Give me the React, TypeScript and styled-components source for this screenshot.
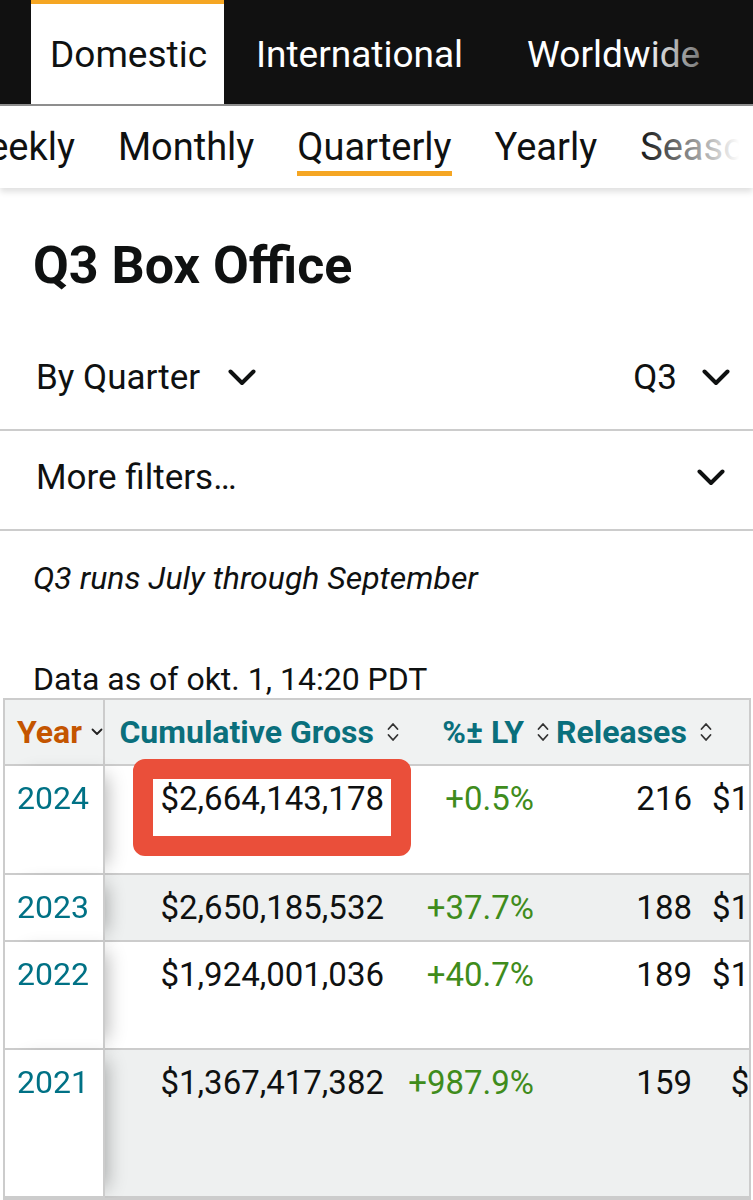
import React from "react";
import styled, { createGlobalStyle, css } from "styled-components";

const GlobalStyle = createGlobalStyle`
  html, body {
    margin: 0;
    padding: 0;
    background: #ffffff;
  }
  body {
    font-family: Roboto, "Liberation Sans", Arial, sans-serif;
    color: #0f1111;
    overflow-x: hidden;
  }
`;

const Page = styled.div`
  width: 753px;
  overflow: hidden;
`;

/* ---------- region tabs ---------- */

const TopNav = styled.nav`
  position: relative;
  display: flex;
  height: 104px;
  padding-left: 31px;
  background: #111111;
  border-bottom: 2px solid #8f8f8f;
  overflow: hidden;

  &::after {
    content: "";
    position: absolute;
    top: 0;
    right: 0;
    bottom: 0;
    width: 110px;
    background: linear-gradient(to right, rgba(17, 17, 17, 0), #111111 92%);
    pointer-events: none;
  }
`;

const TopTab = styled.a<{ $active?: boolean }>`
  display: flex;
  align-items: center;
  padding: 0 32px;
  font-size: 37px;
  color: #ffffff;
  white-space: nowrap;
  text-decoration: none;
  border-top: 4px solid transparent;
  box-sizing: border-box;
  ${(p) =>
    p.$active &&
    css`
      padding: 0 17px 0 19px;
      background: #ffffff;
      color: #0f1111;
      border-top-color: #f5a623;
    `}
`;

/* ---------- period tabs ---------- */

const SubNav = styled.nav`
  position: relative;
  height: 82px;
  display: flex;
  align-items: center;
  overflow: hidden;
  background: #ffffff;
  box-shadow: 0 4px 6px rgba(0, 0, 0, 0.12);

  &::after {
    content: "";
    position: absolute;
    top: 0;
    right: 0;
    bottom: 0;
    width: 115px;
    background: linear-gradient(to right, rgba(255, 255, 255, 0), #ffffff 88%);
    pointer-events: none;
  }
`;

const SubTabStrip = styled.div`
  display: flex;
  gap: 43px;
  margin-left: -45px;
`;

const SubTab = styled.a<{ $active?: boolean }>`
  font-size: 38px;
  line-height: 42px;
  white-space: nowrap;
  color: #0f1111;
  text-decoration: none;
  padding: 8px 0 3px;
  border-bottom: 5px solid ${(p) => (p.$active ? "#f5a623" : "transparent")};
`;

/* ---------- heading and filters ---------- */

const Title = styled.h1`
  margin: 48px 0 35px 33px;
  font-size: 52px;
  line-height: 60px;
  font-weight: 700;
`;

const FilterRow = styled.div<{ $h: number }>`
  display: flex;
  align-items: center;
  justify-content: space-between;
  height: ${(p) => p.$h}px;
  padding: 0 0 6px 36px;
  border-bottom: 2px solid #cccccc;
  box-sizing: border-box;
`;

const Select = styled.div<{ $gap: number; $right?: number }>`
  display: flex;
  align-items: center;
  gap: ${(p) => p.$gap}px;
  margin-right: ${(p) => p.$right ?? 0}px;
  font-size: 35px;
  white-space: nowrap;
`;

const Note = styled.p`
  margin: 28px 0 0 33px;
  font-size: 32px;
  line-height: 38px;
  font-style: italic;
`;

const Stamp = styled.p`
  margin: 63px 0 0 33px;
  font-size: 32px;
  line-height: 38px;
`;

/* ---------- results table ---------- */

const TableFrame = styled.div`
  position: relative;
  margin: 0 2px 0 3px;
  border: 2px solid #cccccc;
  overflow: hidden;
`;

const Table = styled.table`
  border-collapse: separate;
  border-spacing: 0;
  table-layout: fixed;
  width: 906px;
`;

const HeadRow = styled.tr`
  height: 66px;
  background: #f0f2f2;
`;

const HeadCell = styled.th<{ $w: number }>`
  width: ${(p) => p.$w}px;
  padding: 0 3px;
  text-align: right;
  font-size: 32px;
  border-bottom: 2px solid #cccccc;
  white-space: nowrap;
  box-sizing: border-box;
`;

const YearHeadCell = styled(HeadCell)`
  position: sticky;
  left: 0;
  z-index: 1;
  padding-left: 12px;
  text-align: left;
  background: #f0f2f2;
  border-right: 2px solid #cccccc;
`;

const HeadLabel = styled.span<{ $sorted?: boolean }>`
  display: inline-flex;
  align-items: center;
  gap: ${(p) => (p.$sorted ? 9 : 12)}px;
  font-weight: 700;
  color: ${(p) => (p.$sorted ? "#c45500" : "#0a6f7c")};
`;

const Row = styled.tr<{ $h: number; $shade?: boolean }>`
  height: ${(p) => p.$h}px;
  background: ${(p) => (p.$shade ? "#eef0f0" : "#ffffff")};
`;

const Cell = styled.td<{ $tone?: "gain" }>`
  padding: 13px 19px 0 0;
  vertical-align: top;
  text-align: right;
  font-size: 33px;
  white-space: nowrap;
  border-bottom: 2px solid #cccccc;
  color: ${(p) => (p.$tone === "gain" ? "#3f8c1c" : "#0f1111")};
  box-sizing: border-box;
`;

const YearCell = styled.td`
  position: sticky;
  left: 0;
  z-index: 1;
  padding: 13px 0 0 12px;
  vertical-align: top;
  text-align: left;
  font-size: 32px;
  background: #ffffff;
  color: #007185;
  border-bottom: 2px solid #cccccc;
  border-right: 2px solid #cccccc;
  box-shadow: 12px 0 18px -10px rgba(0, 0, 0, 0.3);
  box-sizing: border-box;
`;

const Callout = styled.div`
  position: absolute;
  left: 128px;
  top: 59px;
  width: 278px;
  height: 97px;
  border: 20px solid #ea4f3a;
  border-radius: 12px;
  box-sizing: border-box;
  z-index: 2;
  pointer-events: none;
`;

/* ---------- icons ---------- */

const Chevron = () => (
  <svg width="28" height="17" viewBox="0 0 28 17" fill="none">
    <path d="M2.5 2.5 L14 14 L25.5 2.5" stroke="#0f1111" strokeWidth="4" strokeLinecap="round" strokeLinejoin="round" />
  </svg>
);

const SortIcon = () => (
  <svg width="14" height="24" viewBox="0 0 14 24" fill="none">
    <path d="M2.5 9 L7 4 L11.5 9" stroke="#333" strokeWidth="1.8" strokeLinecap="round" strokeLinejoin="round" />
    <path d="M2.5 15 L7 20 L11.5 15" stroke="#333" strokeWidth="1.8" strokeLinecap="round" strokeLinejoin="round" />
  </svg>
);

const SortDown = () => (
  <svg width="12" height="10" viewBox="0 0 12 10" fill="none">
    <path d="M1.5 2.5 L6 7 L10.5 2.5" stroke="#222" strokeWidth="1.8" strokeLinecap="round" strokeLinejoin="round" />
  </svg>
);

type YearRow = {
  year: string;
  gross: string;
  change: string;
  releases: string;
  average: string;
  height: number;
};

const rows: YearRow[] = [
  { year: "2024", gross: "$2,664,143,178", change: "+0.5%", releases: "216", average: "$12,334,000", height: 109 },
  { year: "2023", gross: "$2,650,185,532", change: "+37.7%", releases: "188", average: "$14,096,731", height: 67 },
  { year: "2022", gross: "$1,924,001,036", change: "+40.7%", releases: "189", average: "$10,179,899", height: 108 },
  { year: "2021", gross: "$1,367,417,382", change: "+987.9%", releases: "159", average: "$8,600,109", height: 148 },
];

export default function App() {
  return (
    <Page>
      <GlobalStyle />
      <TopNav>
        <TopTab $active>Domestic</TopTab>
        <TopTab>International</TopTab>
        <TopTab>Worldwide</TopTab>
      </TopNav>

      <SubNav>
        <SubTabStrip>
          <SubTab>Weekly</SubTab>
          <SubTab>Monthly</SubTab>
          <SubTab $active>Quarterly</SubTab>
          <SubTab>Yearly</SubTab>
          <SubTab>Seasonal</SubTab>
          <SubTab>Holidays</SubTab>
        </SubTabStrip>
      </SubNav>

      <Title>Q3 Box Office</Title>

      <FilterRow $h={100}>
        <Select $gap={28}>
          By Quarter <Chevron />
        </Select>
        <Select $gap={25} $right={23}>
          Q3 <Chevron />
        </Select>
      </FilterRow>

      <FilterRow $h={100}>
        <Select $gap={0}>More filters…</Select>
        <Select $gap={0} $right={28}>
          <Chevron />
        </Select>
      </FilterRow>

      <Note>Q3 runs July through September</Note>
      <Stamp>Data as of okt. 1, 14:20 PDT</Stamp>

      <TableFrame>
        <Table>
          <thead>
            <HeadRow>
              <YearHeadCell $w={100}>
                <HeadLabel $sorted>
                  Year <SortDown />
                </HeadLabel>
              </YearHeadCell>
              <HeadCell $w={298}>
                <HeadLabel>
                  Cumulative Gross <SortIcon />
                </HeadLabel>
              </HeadCell>
              <HeadCell $w={150}>
                <HeadLabel>
                  %± LY <SortIcon />
                </HeadLabel>
              </HeadCell>
              <HeadCell $w={158}>
                <HeadLabel>
                  Releases <SortIcon />
                </HeadLabel>
              </HeadCell>
              <HeadCell $w={200}>
                <HeadLabel>
                  Average <SortIcon />
                </HeadLabel>
              </HeadCell>
            </HeadRow>
          </thead>
          <tbody>
            {rows.map((r, i) => (
              <Row key={r.year} $h={r.height} $shade={i % 2 === 1}>
                <YearCell>{r.year}</YearCell>
                <Cell>{r.gross}</Cell>
                <Cell $tone="gain">{r.change}</Cell>
                <Cell>{r.releases}</Cell>
                <Cell>{r.average}</Cell>
              </Row>
            ))}
          </tbody>
        </Table>
        <Callout />
      </TableFrame>
    </Page>
  );
}
